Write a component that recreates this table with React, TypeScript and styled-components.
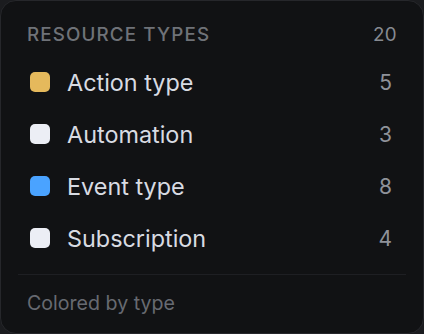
import React from 'react'
import styled, { createGlobalStyle } from 'styled-components'

const types = [
  { label: 'Action type', count: 5, color: '#e5b95c' },
  { label: 'Automation', count: 3, color: '#eceef5' },
  { label: 'Event type', count: 8, color: '#4aa3ff' },
  { label: 'Subscription', count: 4, color: '#eceef5' },
]

const App = () => {
  const total = types.reduce((sum, t) => sum + t.count, 0)
  return (
    <>
      <GlobalStyle />
      <Card>
        <Header>
          <span>Resource types</span>
          <Total>{total}</Total>
        </Header>
        <List>
          {types.map((t) => (
            <Row key={t.label}>
              <Swatch $color={t.color} />
              <Label>{t.label}</Label>
              <Count>{t.count}</Count>
            </Row>
          ))}
        </List>
        <Footer>Colored by type</Footer>
      </Card>
    </>
  )
}

export default App

const GlobalStyle = createGlobalStyle`
  html, body {
    margin: 0;
    background: #1b1c1f;
  }
  body {
    font-family: Inter, "Noto Sans", sans-serif;
  }
`

const Card = styled.div`
  box-sizing: border-box;
  width: 424px;
  height: 334px;
  background: #111214;
  border: 1px solid #26272b;
  border-radius: 16px;
  padding: 17px 17px 0;
  display: flex;
  flex-direction: column;
`

const Header = styled.div`
  display: flex;
  align-items: center;
  justify-content: space-between;
  height: 32px;
  padding: 0 9px;
  font-size: 18.8px;
  font-weight: 500;
  letter-spacing: 0.06em;
  text-transform: uppercase;
  color: #6f7278;
`

const Total = styled.span`
  font-weight: 400;
  color: #878a91;
  letter-spacing: 0.02em;
`

const List = styled.div`
  display: flex;
  flex-direction: column;
  padding: 6px 0 10px;
  border-bottom: 1px solid #1e1f23;
`

const Row = styled.div`
  display: flex;
  align-items: center;
  height: 52px;
  padding: 0 14px 0 12px;
`

const Swatch = styled.span<{ $color: string }>`
  width: 20px;
  height: 20px;
  border-radius: 5px;
  background: ${(props) => props.$color};
  flex-shrink: 0;
`

const Label = styled.span`
  flex: 1;
  margin-left: 17px;
  font-size: 23.4px;
  color: #d8dbe2;
`

const Count = styled.span`
  font-size: 21px;
  color: #8f929a;
`

const Footer = styled.div`
  padding: 16px 9px 0;
  font-size: 19.6px;
  color: #676a71;
`
